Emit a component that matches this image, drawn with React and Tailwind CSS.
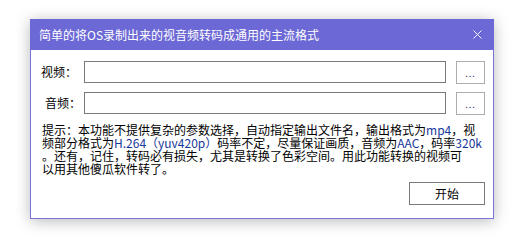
import { X } from 'lucide-react';

const font = { fontFamily: '"Microsoft YaHei", "Noto Sans CJK SC", "Noto Sans", sans-serif' };

function Field({ label, labelPad }) {
  return (
    <div className="flex items-center h-[22px]">
      <span className={`w-[43px] text-[12px] text-black ${labelPad}`}>{label}</span>
      <div className="w-[362px] h-[22px] border border-[#7a7a7a] bg-white" />
      <button className="ml-[10px] w-[29px] h-[23px] border border-[#adadad] bg-white flex items-end justify-center pb-[5px]">
        <span className="text-[9px] leading-none tracking-[1px] text-[#1c2a80]">...</span>
      </button>
    </div>
  );
}

export default function App() {
  const blue = 'text-[#17379a]';
  return (
    <div className="w-[526px] h-[241px] bg-white pt-[19px] pl-[30px]" style={font}>
      <div className="w-[464px] flex flex-col shadow-[0_2px_14px_rgba(0,0,0,0.28)]">
        <div className="h-[31px] bg-[#6c68d5] flex items-center justify-between pl-[9px] pr-[9px]">
          <span className="text-[12px] text-white leading-none">简单的将OS录制出来的视音频转码成通用的主流格式</span>
          <X size={15} strokeWidth={1.5} className="text-white" />
        </div>
        <div className="h-[169px] bg-white border-x border-b border-[#7b73dc] flex flex-col pt-[11px] pl-[10px]">
          <div className="flex flex-col gap-[9px]">
            <Field label="视频：" labelPad="pl-0" />
            <Field label="音频：" labelPad="pl-[4px]" />
          </div>
          <div className="mt-[9px] pl-[1px] text-[12px] leading-[13px] text-black whitespace-nowrap">
            <div>提示：本功能不提供复杂的参数选择，自动指定输出文件名，输出格式为<span className={blue}>mp4</span>，视</div>
            <div>频部分格式为<span className={blue}>H.264（yuv420p）</span>码率不定，尽量保证画质，音频为<span className={blue}>AAC</span>，码率<span className={blue}>320k</span></div>
            <div>。还有，记住，转码必有损失，尤其是转换了色彩空间。用此功能转换的视频可</div>
            <div>以用其他傻瓜软件转了。</div>
          </div>
          <div className="flex justify-end pr-[8px] mt-[7px]">
            <button className="w-[76px] h-[23px] border border-[#7a7a7a] bg-white text-[12px] text-black">开始</button>
          </div>
        </div>
      </div>
    </div>
  );
}
